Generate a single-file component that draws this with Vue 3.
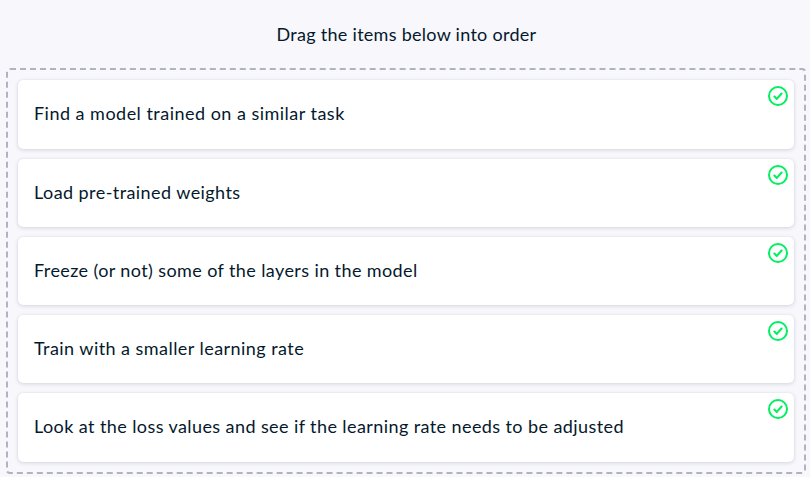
<script setup>
const items = [
  { text: 'Find a model trained on a similar task', spacing: 0.48 },
  { text: 'Load pre-trained weights', spacing: 0.43 },
  { text: 'Freeze (or not) some of the layers in the model', spacing: 0.4 },
  { text: 'Train with a smaller learning rate', spacing: 0.45 },
  { text: 'Look at the loss values and see if the learning rate needs to be adjusted', spacing: 0.412 },
]
</script>

<template>
  <main class="exercise">
    <p class="hint">Drag the items below into order</p>
    <ul class="list">
      <li v-for="item in items" :key="item.text" class="card">
        <span class="label" :style="{ letterSpacing: item.spacing + 'px' }">{{ item.text }}</span>
        <svg class="check" viewBox="0 0 20 20" aria-hidden="true">
          <circle cx="10" cy="10" r="9" />
          <path class="tick" d="M6.4 10.5 8.8 12.9 13.6 7.5" />
        </svg>
      </li>
    </ul>
  </main>
</template>

<style>
body {
  background: #f7f7fc;
}
</style>

<style scoped>
.exercise {
  box-sizing: border-box;
  height: 477px;
  padding: 22px 4px 3px 6px;
  overflow: hidden;
  background: #f7f7fc;
  color: #05192d;
  font: 18px/24px Lato, "Liberation Sans", sans-serif;
}
.hint {
  margin: 0 0 22px;
  padding-left: 1px;
  text-align: center;
  letter-spacing: 0.28px;
}
.list {
  box-sizing: border-box;
  display: flex;
  flex-direction: column;
  gap: 9.8px;
  height: 406px;
  margin: 0;
  padding: 10.4px 10px 9px;
  list-style: none;
  border: 2px dashed #b0b4c0;
  border-radius: 4px;
}
.card {
  display: flex;
  flex: 0 0 68.4px;
  box-sizing: border-box;
  align-items: center;
  justify-content: space-between;
  padding: 0 6px 0 16px;
  background: #fff;
  border-radius: 5px;
  box-shadow: 0 0 1px rgba(5, 25, 45, 0.12), 0 1px 4px rgba(5, 25, 45, 0.14);
}
.label {
  padding-bottom: 2.4px;
  white-space: nowrap;
}
.check {
  align-self: flex-start;
  width: 20px;
  height: 20px;
  margin-top: 6px;
  fill: none;
  stroke: #03ef62;
  stroke-width: 2;
}
.tick {
  stroke-width: 2.1;
  stroke-linecap: round;
  stroke-linejoin: round;
}
</style>
